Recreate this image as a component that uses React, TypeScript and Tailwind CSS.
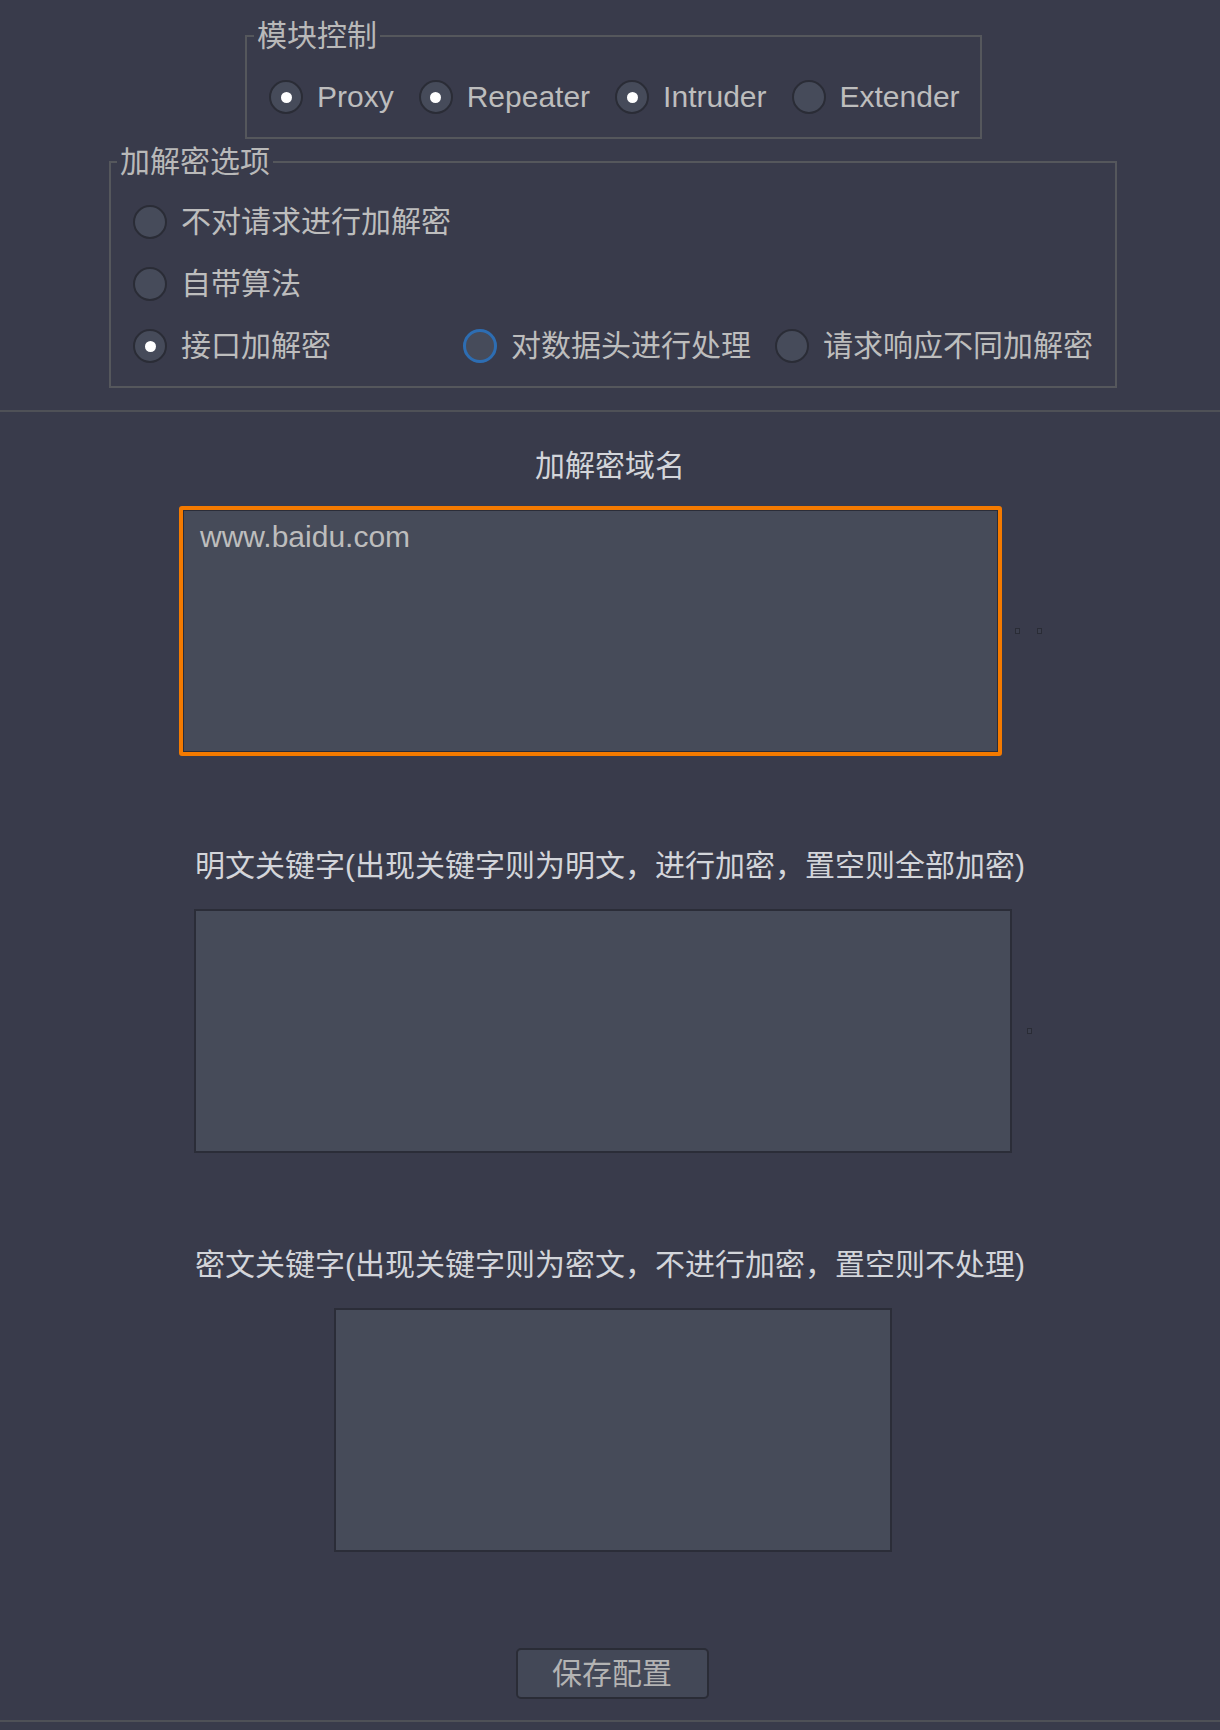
import React, { useState } from "react";

const FONT = "font-['Liberation_Sans','Noto_Sans_CJK_SC',sans-serif]";

type RadioProps = {
  label: string;
  checked?: boolean;
  focused?: boolean;
  onClick?: () => void;
  className?: string;
};

const Radio = ({ label, checked, focused, onClick, className = "" }: RadioProps) => (
  <button
    type="button"
    onClick={onClick}
    className={`flex items-center gap-[14px] text-left ${className}`}
  >
    <span
      className={`flex h-[34px] w-[34px] shrink-0 items-center justify-center rounded-full bg-[#464b5a] ${
        focused ? "border-[3px] border-[#2d6db2]" : "border-2 border-[#2a2c36]"
      }`}
    >
      {checked && <span className="h-[11px] w-[11px] rounded-full bg-white"></span>}
    </span>
    <span className="text-[30px] leading-[36px] text-[#bdbdbd]">{label}</span>
  </button>
);

const Dot = () => (
  <span className="h-[6px] w-[5px] border border-[#2a2c36] bg-[#3c3f4e]"></span>
);

const App = () => {
  const [modules, setModules] = useState<Record<string, boolean>>({
    Proxy: true,
    Repeater: true,
    Intruder: true,
    Extender: false,
  });
  const [mode, setMode] = useState("api");

  return (
    <div className={`min-h-[1730px] w-full bg-[#393b4b] pt-[18px] ${FONT}`}>
      {/* 模块控制 */}
      <fieldset className="ml-[245px] w-[737px] border-2 border-[#55575c] pb-[22px] pl-[7px]">
        <legend className="px-[3px] text-[30px] leading-[36px] text-[#b9b9b9]">模块控制</legend>
        <div className="ml-[15px] mt-[25px] flex items-center gap-[25px]">
          {Object.keys(modules).map((m) => (
            <Radio
              key={m}
              label={m}
              checked={modules[m]}
              onClick={() => setModules({ ...modules, [m]: !modules[m] })}
            />
          ))}
        </div>
      </fieldset>

      {/* 加解密选项 */}
      <fieldset className="ml-[109px] mt-[5px] w-[1008px] border-2 border-[#55575c] pb-[22px] pl-[6px]">
        <legend className="px-[3px] text-[30px] leading-[36px] text-[#b9b9b9]">加解密选项</legend>
        <div className="ml-[16px] mt-[24px] flex flex-col gap-[26px]">
          <Radio label="不对请求进行加解密" checked={mode === "none"} onClick={() => setMode("none")} />
          <Radio label="自带算法" checked={mode === "builtin"} onClick={() => setMode("builtin")} />
          <div className="flex items-center">
            <Radio
              label="接口加解密"
              checked={mode === "api"}
              onClick={() => setMode("api")}
              className="w-[330px]"
            />
            <Radio label="对数据头进行处理" focused className="w-[312px]" />
            <Radio label="请求响应不同加解密" />
          </div>
        </div>
      </fieldset>

      <div className="mt-[22px] h-[2px] w-full bg-[#4f5157]"></div>

      {/* 加解密域名 */}
      <p className="mt-[36px] text-center text-[30px] leading-[36px] text-[#d3d5da]">加解密域名</p>
      <div className="ml-[179px] mt-[22px] flex items-center">
        <div className="h-[250px] w-[823px] rounded-[3px] border-4 border-[#f47a00]">
          <textarea
            defaultValue="www.baidu.com"
            className="block h-full w-full resize-none border border-[#2b2d38] bg-[#464b59] px-[16px] pt-[8px] text-[30px] leading-[36px] text-[#bdbdbd] outline-none"
          />
        </div>
        <div className="ml-[13px] flex gap-[17px]">
          <Dot />
          <Dot />
        </div>
      </div>

      {/* 明文关键字 */}
      <p className="mt-[92px] text-center text-[30px] leading-[36px] text-[#d3d5da]">
        明文关键字(出现关键字则为明文，进行加密，置空则全部加密)
      </p>
      <div className="ml-[194px] mt-[25px] flex items-center">
        <textarea className="block h-[244px] w-[818px] resize-none border-2 border-[#2b2d38] bg-[#464b59] outline-none" />
        <div className="ml-[15px] flex">
          <Dot />
        </div>
      </div>

      {/* 密文关键字 */}
      <p className="mt-[94px] text-center text-[30px] leading-[36px] text-[#d3d5da]">
        密文关键字(出现关键字则为密文，不进行加密，置空则不处理)
      </p>
      <textarea className="ml-[334px] mt-[25px] block h-[244px] w-[558px] resize-none border-2 border-[#2b2d38] bg-[#464b59] outline-none" />

      <div className="mt-[96px] flex justify-center pl-[4px]">
        <button className="h-[51px] w-[193px] rounded-[5px] border-2 border-[#2a2c36] bg-[#434857] text-[30px] leading-[36px] text-[#b3b3b3]">
          保存配置
        </button>
      </div>

      <div className="mt-[21px] h-[2px] w-full bg-[#4f5157]"></div>
    </div>
  );
};

export default App;
